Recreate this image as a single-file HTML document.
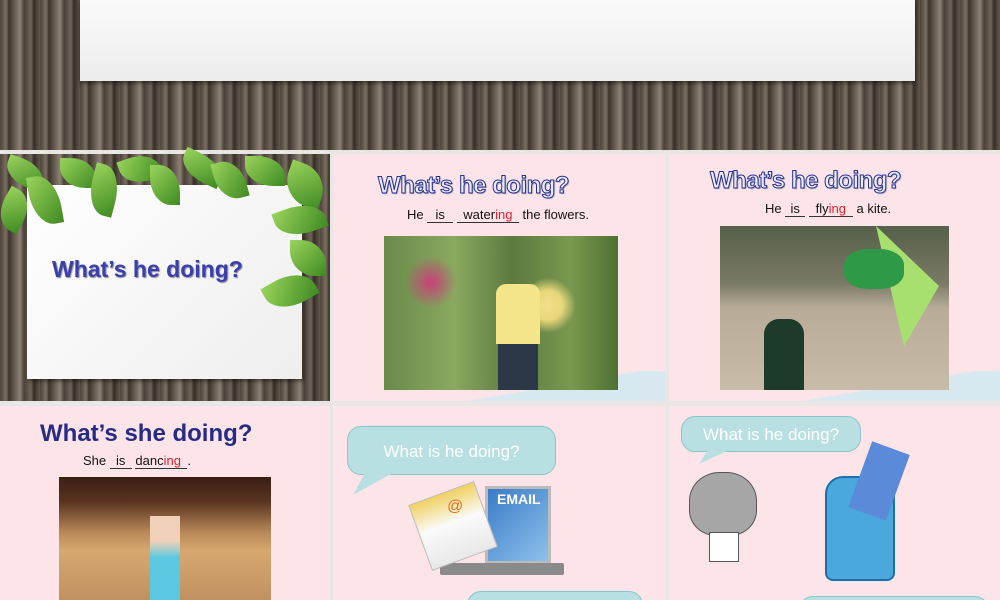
<!DOCTYPE html>
<html><head><meta charset="utf-8"><style>
*{margin:0;padding:0;box-sizing:border-box}
body{width:1000px;height:600px;overflow:hidden;background:#e9e7e5;font-family:"Liberation Sans",sans-serif;position:relative}
.wood{background:repeating-linear-gradient(90deg,#4e443b 0,#7a6e62 6px,#3e352e 9px,#6a5f54 15px,#8c8174 20px,#4c4239 24px,#6e6458 31px,#352d27 34px,#63584d 40px)}
.abs{position:absolute}
.tile{position:absolute;background:#fde4e8;overflow:hidden}
.t1{font-weight:bold;-webkit-text-stroke:1px #2a2f90;color:#e8ecff;font-size:24px;text-shadow:1px 1px 1px #99a;letter-spacing:-0.5px}
.sent{font-size:13px;color:#111}
.u{display:inline-block;border-bottom:1px solid #333;text-align:center}
.r{color:#e0202a}
.bub{position:absolute;background:#b8e0e2;border:1px solid #8cc4c8;border-radius:14px;color:#fff;font-size:17px;text-align:center}
.leaf{position:absolute;background:linear-gradient(135deg,#9ad35c,#3f8a22);border-radius:0 70% 0 70%}
</style></head><body>
<div class="abs wood" style="left:0;top:0;width:1000px;height:150px"></div>
<div class="abs" style="left:80px;top:0;width:835px;height:81px;background:linear-gradient(#fafafa,#ececec);box-shadow:0 2px 4px rgba(0,0,0,.5)"></div>

<!-- tile 1 -->
<div class="abs wood" style="left:0;top:154px;width:330px;height:247px"></div>
<div class="abs" style="left:27px;top:185px;width:275px;height:194px;background:linear-gradient(135deg,#ffffff,#eeeeee);box-shadow:2px 2px 4px rgba(0,0,0,.5)"></div>
<div class="leaf" style="left:5px;top:160px;width:40px;height:26px;transform:rotate(20deg)"></div>
<div class="leaf" style="left:30px;top:175px;width:30px;height:50px;transform:rotate(-10deg)"></div>
<div class="leaf" style="left:60px;top:158px;width:36px;height:30px"></div>
<div class="leaf" style="left:90px;top:165px;width:28px;height:50px;transform:rotate(15deg)"></div>
<div class="leaf" style="left:120px;top:155px;width:40px;height:28px;transform:rotate(-20deg)"></div>
<div class="leaf" style="left:150px;top:165px;width:30px;height:40px"></div>
<div class="leaf" style="left:180px;top:155px;width:44px;height:26px;transform:rotate(25deg)"></div>
<div class="leaf" style="left:215px;top:160px;width:30px;height:40px;transform:rotate(-15deg)"></div>
<div class="leaf" style="left:245px;top:156px;width:40px;height:30px"></div>
<div class="leaf" style="left:285px;top:165px;width:40px;height:40px;transform:rotate(20deg)"></div>
<div class="leaf" style="left:275px;top:205px;width:50px;height:30px;transform:rotate(-20deg)"></div>
<div class="leaf" style="left:290px;top:240px;width:36px;height:36px"></div>
<div class="leaf" style="left:265px;top:275px;width:50px;height:32px;transform:rotate(-30deg)"></div>
<div class="leaf" style="left:0;top:190px;width:28px;height:40px;transform:rotate(30deg)"></div>
<div class="abs" style="left:52px;top:256px;font-size:23px;font-weight:bold;color:#3b3fae;text-shadow:1px 1px 1px #889">What’s he doing?</div>

<!-- tile 2 -->
<div class="tile" style="left:333px;top:154px;width:332px;height:247px">
 <div class="abs" style="left:0;bottom:0;width:332px;height:30px;background:linear-gradient(170deg,transparent 60%,#d8e8f0 62%)"></div>
 <div class="abs t1" style="left:45px;top:18px">What’s he doing?</div>
 <div class="abs sent" style="left:74px;top:53px">He <span class="u" style="width:26px">is</span> <span class="u" style="width:62px">water<span class="r">ing</span></span> the flowers.</div>
 <div class="abs" style="left:51px;top:82px;width:234px;height:154px;background:radial-gradient(circle at 20% 30%,#c9407a 0,transparent 12%),radial-gradient(circle at 70% 45%,#f0e08a 0,#e8d67a 8%,transparent 15%),linear-gradient(90deg,#6a8a4a,#8aa860 30%,#5c7a3e 55%,#7a9850 80%,#4e7032)"></div>
 <div class="abs" style="left:163px;top:130px;width:44px;height:60px;background:#f4e48a;border-radius:10px 10px 0 0"></div>
 <div class="abs" style="left:165px;top:190px;width:40px;height:46px;background:#2c3848"></div>
</div>

<!-- tile 3 -->
<div class="tile" style="left:669px;top:154px;width:331px;height:247px">
 <div class="abs" style="left:0;bottom:0;width:331px;height:30px;background:linear-gradient(170deg,transparent 60%,#d8e8f0 62%)"></div>
 <div class="abs t1" style="left:41px;top:13px">What’s he doing?</div>
 <div class="abs sent" style="left:96px;top:47px">He <span class="u" style="width:20px">is</span> <span class="u" style="width:44px">fly<span class="r">ing</span></span> a kite.</div>
 <div class="abs" style="left:51px;top:72px;width:229px;height:164px;background:linear-gradient(#56604a 0,#7a7a66 35%,#b8ac98 50%,#c8bca8 100%)"></div>
 <div class="abs" style="left:200px;top:72px;width:70px;height:120px;background:#a8e070;clip-path:polygon(10% 0,100% 50%,50% 100%)"></div>
 <div class="abs" style="left:175px;top:95px;width:60px;height:40px;background:#2e9a48;border-radius:40%"></div>
 <div class="abs" style="left:95px;top:165px;width:40px;height:71px;background:#1e3a2a;border-radius:15px 15px 0 0"></div>
</div>

<!-- tile 4 -->
<div class="tile" style="left:0;top:406px;width:330px;height:194px">
 <div class="abs" style="left:40px;top:14px;font-size:24px;font-weight:bold;color:#262c86">What’s she doing?</div>
 <div class="abs sent" style="left:83px;top:47px">She <span class="u" style="width:22px">is</span> <span class="u" style="width:52px;text-align:left">danc<span class="r">ing</span></span>.</div>
 <div class="abs" style="left:59px;top:71px;width:212px;height:123px;background:linear-gradient(#3a1e14 0,#5a3420 20%,#b88858 45%,#d8a870 60%,#c09060 100%)"></div>
 <div class="abs" style="left:150px;top:110px;width:30px;height:84px;background:linear-gradient(#f0d0b8 30%,#5ac8e0 50%)"></div>
</div>

<!-- tile 5 -->
<div class="tile" style="left:333px;top:406px;width:332px;height:194px">
 <div class="bub" style="left:14px;top:20px;width:209px;height:49px;line-height:49px">What is he doing?</div>
 <div class="abs" style="left:20px;top:67px;width:40px;height:22px;background:#b8e0e2;clip-path:polygon(30% 0,100% 0,0 100%)"></div>
 <div class="abs" style="left:152px;top:80px;width:66px;height:78px;background:linear-gradient(135deg,#3a7cc8,#8ec0ea);border:3px solid #bbb"></div>
 <div class="abs" style="left:107px;top:157px;width:124px;height:12px;background:#8a8a8a;border-radius:2px"></div>
 <div class="abs" style="left:164px;top:85px;color:#fff;font-weight:bold;font-size:14px">EMAIL</div>
 <div class="abs" style="left:85px;top:85px;width:70px;height:70px;background:linear-gradient(#f0d060,#fafafa 45%,#e8e8e8);transform:rotate(-20deg);border:1px solid #bbb"></div>
 <div class="abs" style="left:114px;top:92px;color:#e07020;font-size:16px">@</div>
 <div class="bub" style="left:134px;top:185px;width:176px;height:30px"></div>
</div>

<!-- tile 6 -->
<div class="tile" style="left:669px;top:406px;width:331px;height:194px">
 <div class="bub" style="left:12px;top:10px;width:180px;height:36px;line-height:36px">What is he doing?</div>
 <div class="abs" style="left:30px;top:44px;width:30px;height:14px;background:#b8e0e2;clip-path:polygon(30% 0,100% 0,0 100%)"></div>
 <div class="abs" style="left:20px;top:66px;width:68px;height:64px;background:#a6a6a6;border-radius:45% 45% 40% 40%;border:1px solid #555"></div>
 <div class="abs" style="left:40px;top:126px;width:30px;height:30px;background:#fff;border:1px solid #555"></div>
 <div class="abs" style="left:156px;top:70px;width:70px;height:105px;background:#4aa8dc;border:2px solid #1e6ea8;border-radius:18px 18px 8px 8px"></div>
 <div class="abs" style="left:190px;top:40px;width:40px;height:70px;background:#5a8ad8;transform:rotate(20deg)"></div>
 <div class="bub" style="left:130px;top:190px;width:190px;height:30px"></div>
</div>
</body></html>
